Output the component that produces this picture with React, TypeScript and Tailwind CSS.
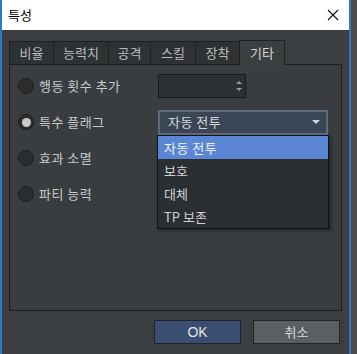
const font = { fontFamily: '"Noto Sans CJK KR", "Noto Sans", sans-serif' };

const tabs = ["비율", "능력치", "공격", "스킬", "장착", "기타"];
const tabWidths = ["w-[45px]", "w-[56px]", "w-[43px]", "w-[46px]", "w-[45px]", "w-[46px]"];

function Radio({ checked }: { checked?: boolean }) {
  return (
    <div className="w-[16px] h-[16px] rounded-full bg-[#2a2c2e] border border-[#1f2022] flex items-center justify-center shrink-0">
      {checked && <div className="w-[9px] h-[9px] rounded-full bg-[#c9cbcd]" />}
    </div>
  );
}

function Row({ label, checked, children }: { label: string; checked?: boolean; children?: React.ReactNode }) {
  return (
    <div className="h-[36px] flex items-center">
      <div className="w-[148px] flex items-center gap-[5px] pl-[8px]">
        <Radio checked={checked} />
        <span className="text-[13px] text-[#c8cacc] tracking-[0.5px]">{label}</span>
      </div>
      {children}
    </div>
  );
}

export default function App() {
  return (
    <div className="w-[357px] h-[354px] bg-[#4a4c4e] overflow-hidden" style={font}>
      <div className="w-[351px] h-[354px] flex flex-col border-l-2 border-r-2 border-[#2f78c4] bg-[#3c3f41]">
        {/* title bar */}
        <div className="h-[30px] bg-white flex items-center justify-between pl-[6px] pr-[8px] shrink-0">
          <span className="text-[13px] text-black">특성</span>
          <svg width="12" height="12" viewBox="0 0 12 12" className="mr-[2px]">
            <path d="M1 1 L11 11 M11 1 L1 11" stroke="#111" strokeWidth="1.1" />
          </svg>
        </div>

        {/* tabs */}
        <div className="flex items-end pl-[7px] pt-[9px] h-[34px] shrink-0">
          {tabs.map((t, i) =>
            i === 5 ? (
              <div
                key={t}
                className={`${tabWidths[i]} h-[25px] bg-[#3c3f41] border border-b-0 border-[#1f2022] flex items-center justify-center text-[13px] text-[#d4d6d8] relative top-[1px] z-10`}
              >
                {t}
              </div>
            ) : (
              <div
                key={t}
                className={`${tabWidths[i]} h-[23px] bg-[#2f3234] border border-b-0 border-[#1f2022] -mr-px flex items-center justify-center text-[13px] text-[#b9bbbd]`}
              >
                {t}
              </div>
            )
          )}
        </div>

        {/* panel */}
        <div className="relative mx-[7px] w-[333px] h-[247px] border border-[#1c1d1f] bg-[#3a3d3f] pt-[3px] shrink-0">
          <Row label="행동 횟수 추가">
            <div className="w-[88px] h-[24px] bg-[#2d3032] border border-[#1a1b1c] flex justify-end items-center pr-[3px]">
              <div className="flex flex-col gap-[4px] items-center">
                <div className="w-0 h-0 border-l-[3px] border-r-[3px] border-b-[3px] border-l-transparent border-r-transparent border-b-[#9a9c9e]" />
                <div className="w-0 h-0 border-l-[3px] border-r-[3px] border-t-[3px] border-l-transparent border-r-transparent border-t-[#9a9c9e]" />
              </div>
            </div>
          </Row>
          <Row label="특수 플래그" checked>
            <div className="w-[170px] h-[25px] bg-[#3a4656] border-2 border-[#5e6b7a] flex items-center justify-between pl-[8px] pr-[6px]">
              <span className="text-[13px] text-[#d6d8da] tracking-[0.5px]">자동 전투</span>
              <div className="w-0 h-0 border-l-[4px] border-r-[4px] border-t-[4px] border-l-transparent border-r-transparent border-t-[#d0d2d4]" />
            </div>
          </Row>
          <Row label="효과 소멸" />
          <Row label="파티 능력" />

          {/* dropdown list */}
          <div className="absolute left-[147px] top-[70px] w-[172px] bg-[#2c2f32] border border-[#111214] flex flex-col shadow-[2px_2px_3px_rgba(0,0,0,0.4)] z-20">
            <div className="h-[23px] bg-[#5b86d4] flex items-center pl-[6px] text-[13px] text-[#eef1f6] tracking-[0.5px]">자동 전투</div>
            <div className="h-[23px] flex items-center pl-[6px] text-[13px] text-[#d0d2d4]">보호</div>
            <div className="h-[23px] flex items-center pl-[6px] text-[13px] text-[#d0d2d4]">대체</div>
            <div className="h-[23px] flex items-center pl-[6px] text-[13px] text-[#d0d2d4]">TP 보존</div>
          </div>
        </div>

        {/* buttons */}
        <div className="flex justify-end gap-[12px] pr-[9px] pt-[9px]">
          <button className="w-[87px] h-[24px] bg-[#3a4e72] border border-[#1d2330] text-[14px] text-[#e2e5ea]" style={{ fontFamily: '"Liberation Sans", sans-serif' }}>
            OK
          </button>
          <button className="w-[87px] h-[24px] bg-[#5c5f61] border border-[#222426] text-[13px] text-[#d8dadc]">
            취소
          </button>
        </div>
      </div>
    </div>
  );
}
